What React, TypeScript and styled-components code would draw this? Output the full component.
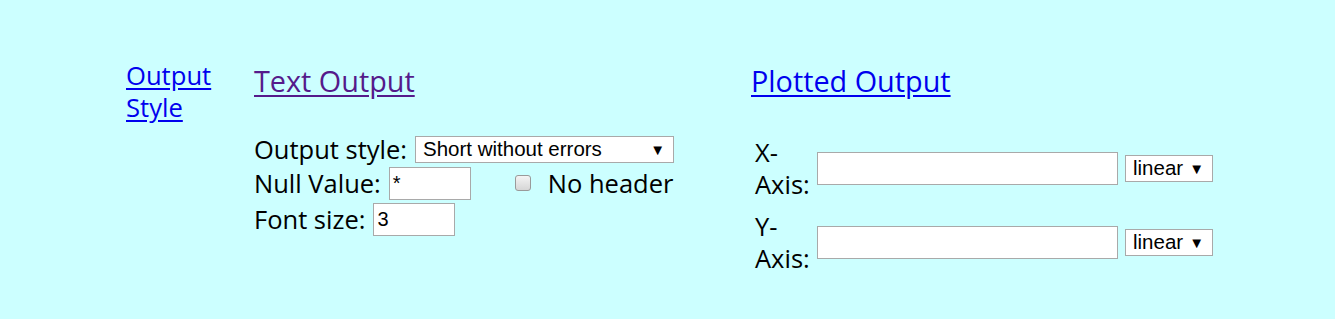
import React from "react";
import styled, { createGlobalStyle } from "styled-components";

const Global = createGlobalStyle`
  html, body { margin: 0; padding: 0; background: #ccffff; }
  body { font-family: "Open Sans", "Noto Sans", sans-serif; color: #000; }
`;

const Page = styled.div`
  display: flex;
  align-items: flex-start;
  padding: 58px 0 0 126px;
  height: 261px;
  background: #ccffff;
`;

const SideCol = styled.div`
  width: 128px;
  padding-top: 2px;
  font-size: 25.6px;
  line-height: 32px;
`;

const Link = styled.a<{ $visited?: boolean }>`
  color: ${(p) => (p.$visited ? "#551a8b" : "#0000ee")};
  text-decoration: underline;
  text-underline-offset: 3px;
`;

const Section = styled.div<{ $w: number }>`
  width: ${(p) => p.$w}px;
  display: flex;
  flex-direction: column;
`;

const Heading = styled.div`
  font-size: 28.8px;
  line-height: 36px;
  margin-top: 5px;
`;

const Form = styled.div`
  margin-top: 34px;
  font-size: 25.5px;
  display: flex;
  flex-direction: column;
`;

const Row = styled.div<{ $h: number }>`
  display: flex;
  align-items: center;
  height: ${(p) => p.$h}px;
  white-space: nowrap;
`;

const Label = styled.span`
  margin-right: 8px;
`;

const Select = styled.div<{ $w: number; $ml?: number }>`
  width: ${(p) => p.$w}px;
  height: 27px;
  margin-left: ${(p) => p.$ml ?? 0}px;
  box-sizing: border-box;
  border: 1px solid #a9a9a9;
  background: #fff;
  display: flex;
  align-items: center;
  justify-content: space-between;
  padding: 0 8px 0 7px;
  font-family: "Liberation Sans", Arial, sans-serif;
  font-size: 20.5px;
  color: #000;
`;

const Arrow = styled.span`
  font-size: 15px;
`;

const TextInput = styled.div<{ $w: number }>`
  width: ${(p) => p.$w}px;
  height: 33px;
  box-sizing: border-box;
  border: 1px solid #a9a9a9;
  background: #fff;
  font-family: "Liberation Sans", Arial, sans-serif;
  font-size: 20px;
  display: flex;
  align-items: center;
  padding-left: 3px;
`;

const Check = styled.span`
  display: inline-block;
  width: 16px;
  height: 16px;
  box-sizing: border-box;
  border: 1px solid #9a9a9a;
  border-radius: 3px;
  background: linear-gradient(#f4f4f4, #d6d6d6);
  margin: 0 17px 0 44px;
`;

const AxisTable = styled.div`
  margin-top: 37px;
  margin-left: 4px;
  display: flex;
  flex-direction: column;
  gap: 10px;
`;

const AxisRow = styled.div`
  display: flex;
  align-items: center;
  font-size: 25.5px;
`;

const AxisLabel = styled.div`
  width: 62px;
  line-height: 32px;
`;

export default function App() {
  return (
    <>
      <Global />
      <Page>
        <SideCol>
          <Link href="#">Output<br />Style</Link>
        </SideCol>
        <Section $w={497}>
          <Heading>
            <Link href="#" $visited>Text Output</Link>
          </Heading>
          <Form>
            <Row $h={32}>
              <Label>Output style:</Label>
              <Select $w={259}>
                <span>Short without errors</span>
                <Arrow>▼</Arrow>
              </Select>
            </Row>
            <Row $h={36}>
              <Label>Null Value:</Label>
              <TextInput $w={82}>*</TextInput>
              <Check />
              <span>No header</span>
            </Row>
            <Row $h={36}>
              <Label>Font size:</Label>
              <TextInput $w={82}>3</TextInput>
            </Row>
          </Form>
        </Section>
        <Section $w={480}>
          <Heading>
            <Link href="#">Plotted Output</Link>
          </Heading>
          <AxisTable>
            <AxisRow>
              <AxisLabel>X-<br />Axis:</AxisLabel>
              <TextInput $w={301} />
              <Select $w={88} $ml={7}>
                <span>linear</span>
                <Arrow>▼</Arrow>
              </Select>
            </AxisRow>
            <AxisRow>
              <AxisLabel>Y-<br />Axis:</AxisLabel>
              <TextInput $w={301} />
              <Select $w={88} $ml={7}>
                <span>linear</span>
                <Arrow>▼</Arrow>
              </Select>
            </AxisRow>
          </AxisTable>
        </Section>
      </Page>
    </>
  );
}
